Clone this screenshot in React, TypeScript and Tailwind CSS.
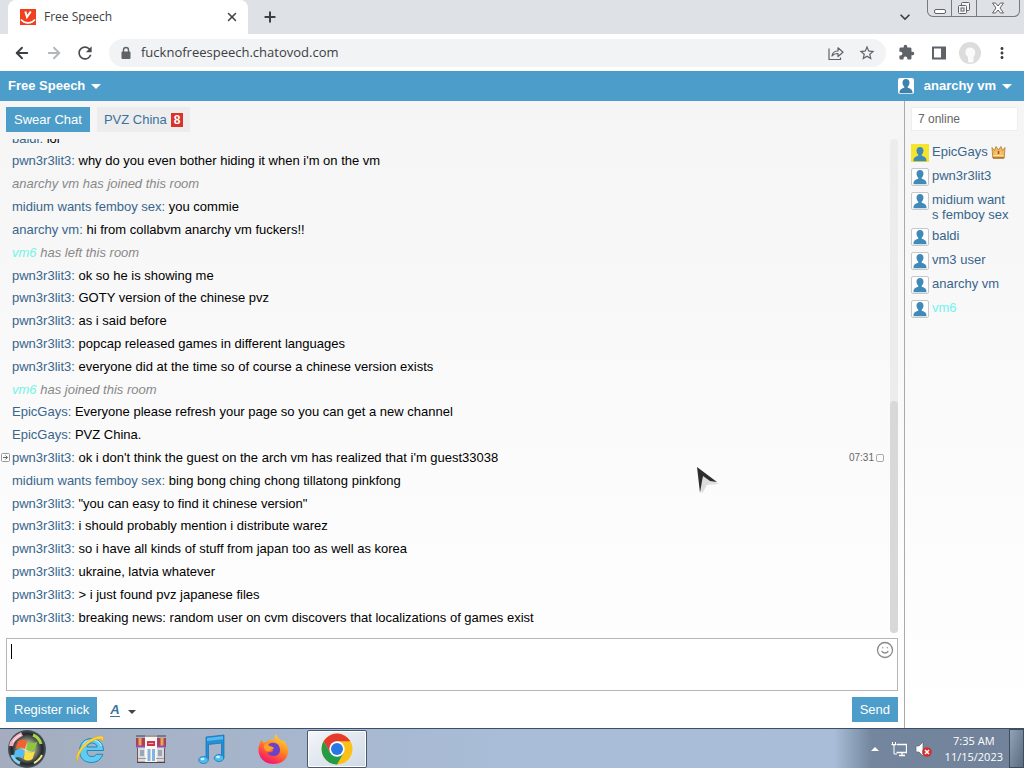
import React from 'react';
import { ArrowLeft, ArrowRight, Plus, Smile, X } from 'lucide-react';
import { MdKeyboardArrowDown, MdMoreVert, MdRefresh, MdStarBorder } from 'react-icons/md';

interface Message {
  from: string;
  text: string;
  system?: boolean;
  time?: string;
}

const messages: Message[] = [
  { from: 'baldi', text: 'lol' },
  { from: 'pwn3r3lit3', text: "why do you even bother hiding it when i'm on the vm" },
  { from: 'anarchy vm', text: 'has joined this room', system: true },
  { from: 'midium wants femboy sex', text: 'you commie' },
  { from: 'anarchy vm', text: 'hi from collabvm anarchy vm fuckers!!' },
  { from: 'vm6', text: 'has left this room', system: true },
  { from: 'pwn3r3lit3', text: 'ok so he is showing me' },
  { from: 'pwn3r3lit3', text: 'GOTY version of the chinese pvz' },
  { from: 'pwn3r3lit3', text: 'as i said before' },
  { from: 'pwn3r3lit3', text: 'popcap released games in different languages' },
  { from: 'pwn3r3lit3', text: 'everyone did at the time so of course a chinese version exists' },
  { from: 'vm6', text: 'has joined this room', system: true },
  { from: 'EpicGays', text: 'Everyone please refresh your page so you can get a new channel' },
  { from: 'EpicGays', text: 'PVZ China.' },
  { from: 'pwn3r3lit3', text: "ok i don't think the guest on the arch vm has realized that i'm guest33038", time: '07:31' },
  { from: 'midium wants femboy sex', text: 'bing bong ching chong tillatong pinkfong' },
  { from: 'pwn3r3lit3', text: '"you can easy to find it chinese version"' },
  { from: 'pwn3r3lit3', text: 'i should probably mention i distribute warez' },
  { from: 'pwn3r3lit3', text: 'so i have all kinds of stuff from japan too as well as korea' },
  { from: 'pwn3r3lit3', text: 'ukraine, latvia whatever' },
  { from: 'pwn3r3lit3', text: '> i just found pvz japanese files' },
  { from: 'pwn3r3lit3', text: 'breaking news: random user on cvm discovers that localizations of games exist' },
];

const users = ['EpicGays', 'pwn3r3lit3', 'midium wants femboy sex', 'baldi', 'vm3 user', 'anarchy vm', 'vm6'];

const Caret: React.FC<{ className?: string }> = ({ className }) => (
  <svg viewBox="0 0 10 5" className={className ?? 'h-[5px] w-2.5'} fill="currentColor">
    <path d="M0 0h10L5 5z" />
  </svg>
);

const PersonIcon: React.FC<{ className?: string }> = ({ className }) => (
  <svg viewBox="0 0 16 16" className={className} fill="currentColor">
    <path d="M8 1c2.200 0 3.500 1.500 3.500 3.600S10.300 8.300 9.700 8.800v1c2.300.5 4.800 1.700 4.800 4.700v.8h-13v-.8c0-3 2.500-4.200 4.800-4.700v-1C5.700 8.300 4.500 6.700 4.500 4.600S5.800 1 8 1z" />
  </svg>
);

const CrownIcon = () => (
  <svg viewBox="0 0 15 14" className="mt-px h-3.5 w-[15px]">
    <path d="M1 2.500l2.500 3L5 1.500l2.500 3.500L10 1.500l1.500 4 2.500-3-.8 10.500H1.800z" fill="#f2b95a" stroke="#b07a35" strokeWidth=".8" />
    <path d="M2.500 10.500h10M4.500 8h1.500M9 8h1.500" stroke="#fbe59a" />
    <path d="M7.500 6v3" stroke="#b8452f" strokeWidth="1.500" />
    <path d="M2 13h11" stroke="#8b5522" />
  </svg>
);

const Favicon = () => (
  <svg viewBox="0 0 16 16" className="h-4 w-4">
    <path fill="#f0401f" d="M0 0h16v16H0z" />
    <path d="M5.300 2.500L7 8l3.800-5.500" fill="none" stroke="#fff" strokeWidth="2" />
    <path d="M1 10.500c3.500 4.500 10.500 4.500 14 0" fill="none" stroke="#fff" strokeWidth="1.700" />
  </svg>
);

const BrowserTabs = () => (
  <div className="flex h-[34px] bg-[#dee1e6] pl-2 text-[#3c4043]">
    <div className="flex h-[34px] w-60 items-center rounded-t-lg bg-white pr-[9px] pl-3">
      <Favicon />
      <span className="ml-2 flex-1 text-xs">Free Speech</span>
      <button type="button" aria-label="Close tab">
        <X className="h-3.5 w-3.5" strokeWidth={2.5} />
      </button>
    </div>
    <button type="button" aria-label="New tab" className="ml-3.5">
      <Plus className="h-4 w-4" strokeWidth={3} />
    </button>
    <button type="button" aria-label="Search tabs" className="ml-auto">
      <MdKeyboardArrowDown className="h-5 w-5" />
    </button>
    <div className="mr-1 ml-3 flex h-[17px] divide-x divide-[#777b80] rounded-b-md border border-t-0 border-[#777b80] text-[#5f6368]">
      <button type="button" aria-label="Minimize" className="flex w-6 items-center justify-center">
        <svg viewBox="0 0 12 14" className="h-3.5 w-3" fill="#fff" stroke="currentColor">
          <rect x=".5" y="8.500" width="11" height="4" rx="1.500" />
        </svg>
      </button>
      <button type="button" aria-label="Restore" className="flex w-[25px] items-center justify-center">
        <svg viewBox="0 0 14 14" className="h-3.5 w-3.5" fill="#f4f5f6" stroke="currentColor">
          <rect x="4.500" y="1.500" width="8" height="8" rx="1" />
          <rect x="1.500" y="4.500" width="8" height="8" rx="1" />
          <rect x="4" y="7" width="3" height="3" />
        </svg>
      </button>
      <button type="button" aria-label="Close" className="flex w-[42px] items-center justify-center">
        <svg viewBox="0 0 14 12" className="h-3 w-3.5" fill="#fff" stroke="currentColor">
          <path d="M1.500 1h3L7 4l2.500-3h3L9 6l3.500 5h-3L7 8l-2.500 3h-3L5 6z" />
        </svg>
      </button>
    </div>
  </div>
);

const AddressBar = () => (
  <div className="flex h-[37px] items-center bg-white px-[13px] text-[#5f6368]">
    <button type="button" aria-label="Back"><ArrowLeft className="h-[18px] w-[18px] text-[#3c4043]" strokeWidth={2.5} /></button>
    <button type="button" aria-label="Forward" className="ml-3.5"><ArrowRight className="h-[18px] w-[18px] text-[#b4b7ba]" strokeWidth={2.5} /></button>
    <button type="button" aria-label="Reload" className="ml-3"><MdRefresh className="h-5 w-5 text-[#4a4d51]" /></button>
    <div className="ml-3.5 flex h-7 flex-1 items-center rounded-full bg-[#f1f3f4] px-2.5">
      <svg viewBox="0 0 14 14" className="h-3.5 w-3.5">
        <path d="M4.500 6V4a2.500 2.500 0 0 1 5 0v2" fill="none" stroke="currentColor" strokeWidth="1.400" />
        <rect x="2.500" y="5.500" width="9" height="7.500" rx="1" fill="currentColor" />
      </svg>
      <input
        aria-label="Address"
        readOnly
        value="fucknofreespeech.chatovod.com"
        className="ml-2 min-w-0 flex-1 bg-transparent text-[13px] text-[#3c4043] outline-none"
      />
      <button type="button" aria-label="Share">
        <svg viewBox="0 0 16 16" className="h-4 w-4" fill="none" stroke="currentColor" strokeWidth="1.200">
          <path d="M1 3.500v11h11.500V12.500" />
          <path d="M4 11c.5-3.500 3-5 6-5V2.800l5 4.400-5 4.300V8.500C7.500 8.500 5.500 9 4 11z" strokeLinejoin="round" />
        </svg>
      </button>
      <button type="button" aria-label="Bookmark" className="ml-3.5"><MdStarBorder className="h-[18px] w-[18px]" /></button>
    </div>
    <button type="button" aria-label="Extensions" className="ml-3">
      <svg viewBox="0 0 24 24" className="h-[17px] w-[17px]" fill="currentColor">
        <path d="M20.500 11H19V7c0-1.100-.9-2-2-2h-4V3.500a2.500 2.500 0 0 0-5 0V5H4c-1.100 0-2 .9-2 2v3.800h1.500a2.700 2.700 0 0 1 0 5.400H2V20c0 1.100.9 2 2 2h3.800v-1.500a2.700 2.700 0 0 1 5.400 0V22H17c1.100 0 2-.9 2-2v-4h1.500a2.500 2.500 0 0 0 0-5z" />
      </svg>
    </button>
    <button type="button" aria-label="Side panel" className="ml-4">
      <svg viewBox="0 0 16 16" className="h-4 w-4">
        <path d="M2 2.500h12v11H2z" fill="none" stroke="currentColor" strokeWidth="2" />
        <path d="M10 2h4v12h-4z" fill="currentColor" />
      </svg>
    </button>
    <button type="button" aria-label="Profile" className="ml-3">
      <svg viewBox="0 0 22 22" className="h-[22px] w-[22px]">
        <circle cx="11" cy="11" r="11" fill="#dcdcdc" />
        <path d="M9 20v-5C4.500 12 6 5.500 11 5.500s7 5.500 3.500 9.500V20c-1.500 1-4 1-5.500 0z" fill="#fafafa" />
      </svg>
    </button>
    <button type="button" aria-label="Menu" className="ml-3"><MdMoreVert className="h-[18px] w-[18px] text-[#3c4043]" /></button>
  </div>
);

const ChatHeader = () => (
  <header className="flex h-[30px] items-center justify-between bg-[#4c9dc9] px-2 font-bold text-white [text-shadow:0_1px_1px_#31729a]">
    <button type="button" className="flex items-center gap-1.5">
      Free Speech <Caret />
    </button>
    <button type="button" className="mr-1 flex items-center gap-1.5">
      <span className="mr-1 flex h-4 w-4 items-center justify-center rounded-xs bg-white">
        <PersonIcon className="h-4 w-4 text-[#3c82ac]" />
      </span>
      anarchy vm <Caret />
    </button>
  </header>
);

const MessageRow: React.FC<{ message: Message }> = ({ message }) => {
  const { from, text, system, time } = message;
  const name = from === 'vm6' ? 'text-[#74f5e6]' : system ? '' : 'text-[#38658c]';
  return (
    <li className="relative flex min-h-0 flex-1 items-center whitespace-pre pr-1.5 pl-3">
      {time && (
        <svg viewBox="0 0 9 9" className="absolute left-px h-[9px] w-[9px]" fill="none" stroke="#999">
          <rect x=".5" y=".5" width="8" height="8" rx="1" />
          <path d="M2 4.500h4.500M4.500 2.500l2 2-2 2" stroke="#666" />
        </svg>
      )}
      <p className={system ? 'flex-1 text-[#888] italic' : 'flex-1'}>
        <span className={name}>{from}</span>
        {system ? ' ' : <span className="text-[#38658c]">: </span>}
        {text}
      </p>
      {time && (
        <label className="flex items-center gap-0.5 text-[10px] text-[#666]">
          {time}
          <input type="checkbox" className="h-2 w-2 appearance-none rounded-xs border border-[#aaa]" />
        </label>
      )}
    </li>
  );
};

const ChatRoom = () => (
  <main className="flex min-w-0 flex-1 flex-col">
    <nav className="flex gap-[7px] px-1.5 pt-1.5">
      <button type="button" className="h-[25px] bg-[#4c9dc9] px-2 text-white">Swear Chat</button>
      <button type="button" className="flex h-[25px] items-center gap-1 bg-[#ededed] px-[7px] text-[#38739c]">
        PVZ China
        <span className="bg-[#d9342b] px-[3px] text-xs leading-[14px] font-bold text-white">8</span>
      </button>
    </nav>
    <div className="mt-[7px] mr-1.5 flex min-h-0 flex-1">
      <div className="flex min-h-0 flex-1 flex-col justify-end overflow-hidden pb-1">
        <ul className="flex h-[502px] shrink-0 flex-col">
          {messages.map((message, i) => (
            <MessageRow key={i} message={message} />
          ))}
        </ul>
      </div>
      <div className="flex w-2 flex-col justify-end rounded-full bg-[#ececec]">
        <div className="h-[232px] rounded-sm bg-[#d8d8d8]" />
      </div>
    </div>
    <form className="px-1.5 pt-[5px] pb-1.5">
      <div className="relative flex">
        <textarea aria-label="Message" className="h-[53px] w-full resize-none border border-[#b5b5b5] bg-white px-1 py-1 outline-none" />
        <span className="absolute top-1.5 left-[5px] h-[15px] w-px bg-black" />
        <Smile className="absolute top-[3px] right-1 h-[18px] w-[18px] text-[#888]" strokeWidth={1.7} />
      </div>
      <div className="mt-1.5 flex items-center">
        <button type="button" className="h-[25px] bg-[#4c9dc9] px-2 text-white">Register nick</button>
        <button type="button" className="ml-[13px] flex items-center gap-2 text-[#38739c]">
          <span className="border-b border-[#38739c] leading-[13px] font-bold italic">A</span>
          <Caret className="mt-1 h-1 w-2 text-[#444]" />
        </button>
        <button type="button" className="ml-auto h-[25px] bg-[#4c9dc9] px-2 text-white">Send</button>
      </div>
    </form>
  </main>
);

const UserList = () => (
  <aside className="w-[120px] border-l border-[#aaa] px-1.5 py-1.5">
    <input
      aria-label="Search users"
      placeholder="7 online"
      className="h-6 w-full border border-[#eee] bg-white px-1.5 text-xs outline-none placeholder:text-[#666]"
    />
    <ul className="mt-[13px] mr-2 flex flex-col gap-1.5 leading-[15px]">
      {users.map((user, i) => (
        <li key={user} className="flex min-h-[18px] gap-[3px]">
          <span
            className={
              i === 0
                ? 'flex h-[18px] w-[18px] shrink-0 items-end justify-center bg-[#f5e62c]'
                : 'flex h-[18px] w-[18px] shrink-0 items-end justify-center rounded-xs border border-[#c8c8c8] bg-white'
            }
          >
            <PersonIcon className="h-4 w-4 text-[#3f8ab8]" />
          </span>
          <a href="#" className={user === 'vm6' ? 'break-all text-[#6ff5ee]' : 'break-all text-[#38658c]'}>
            {user}
          </a>
          {i === 0 && <CrownIcon />}
        </li>
      ))}
    </ul>
  </aside>
);

const StartOrb = () => (
  <svg viewBox="0 0 40 40" className="h-10 w-10">
    <defs>
      <radialGradient id="orb">
        <stop offset="0" stopColor="#fff3c4" />
        <stop offset=".45" stopColor="#8b8f7a" />
        <stop offset=".8" stopColor="#22282a" />
        <stop offset="1" stopColor="#4b5560" />
      </radialGradient>
    </defs>
    <circle cx="20" cy="20" r="19" fill="url(#orb)" />
    <path d="M11 12c3-2 6-2 9 0l-2 8c-3-2-6-2-9.500 0z" fill="#f0622f" />
    <path d="M21 12.500c3 2 6 2 9.500 0l-2.500 8c-3 2-6 2-9 0z" fill="#8cc63e" />
    <path d="M8.200 21.500c3.500-2 6.500-2 9.500 0l-2 8c-3-2-6-2-9.500 0z" fill="#52bdf2" />
    <path d="M18.500 22c3 2 6 2 9.500 0l-2.500 8c-3 2-6 2-9 0z" fill="#fbdf4a" />
    <path d="M4 17c1-6 5-9 11-12" stroke="#f5aebf" strokeWidth="4" fill="none" />
    <path d="M6 13c2-4 5-6 8-7" stroke="#fff" strokeWidth="1" fill="none" />
    <path d="M26 6c5 2 7 5 8 9" stroke="#a6d64a" strokeWidth="3" fill="none" />
    <path d="M5 26c2 5 5 7 8 8" stroke="#7fd0f5" strokeWidth="3" fill="none" />
    <path d="M35 26c-2 4-4 6-8 8" stroke="#efe68a" strokeWidth="2" fill="none" />
  </svg>
);

const ExplorerIcon = () => (
  <svg viewBox="0 0 32 32" className="h-8 w-8">
    <path d="M29.500 17.500H13c0 4.500 2 6 5 6 2.200 0 3.500-.8 4.500-2.200h6.300C27 26.500 23 29.500 17.300 29.500 10.300 29.500 5.500 25 5.500 17.800S10.500 5.500 17.500 5.500s12 5 12 12zM13 14h10c-.3-2.500-2.200-4-4.900-4S13.500 11.500 13 14z" fill="#5fcdf2" stroke="#2086bd" />
    <path d="M8 15c1-5 5-8 10-8s8 2 9.500 6" fill="none" stroke="#b5ecfb" strokeWidth="1.200" />
    <path d="M4 29C0 25 4 15 14 8c7-5 14-6 15-4 1 1 0 3-1 5 0-2 0-3-2-3-5-.5-14 5-18 11-3 5-5 9-4 12z" fill="#fbd43c" stroke="#dba51f" strokeWidth=".5" />
  </svg>
);

const ShopIcon = () => (
  <svg viewBox="0 0 32 32" className="h-8 w-8">
    <path d="M3 13h26v15H3z" fill="#ded9d6" />
    <path d="M10 2h12v27H10z" fill="#f8f6f2" />
    <path d="M1 5h9v9H1zM22 5h9v9h-9z" fill="#a8405e" />
    <path d="M3.500 5h3v9h-3zM25.500 5h3v9h-3z" fill="#eda650" />
    <path d="M1 13.500h9M22 13.500h9" stroke="#8c4fb0" strokeWidth="2" />
    <path d="M12 8h8v5h-8z" fill="#cf3148" />
    <path d="M13.500 10.500h5" stroke="#f3b0a8" />
    <path d="M12.500 16h3v12h-3zM17 16h3v12h-3z" fill="#86b3de" />
    <path d="M5 17h4v6H5zM23 17h4v6h-4z" fill="#93a9bd" />
    <path d="M1 3h30M2 29.500h28" stroke="#4c4240" />
    <path d="M2.500 15v14M29.500 15v14" stroke="#6b5753" />
    <path d="M3 25.500h8M21 25.500h8" stroke="#a79a94" />
  </svg>
);

const MusicIcon = () => (
  <svg viewBox="0 0 32 32" className="h-8 w-8" stroke="#0d70b3" strokeWidth=".7">
    <path d="M10 4l18-2v23h-2.500V10L12.500 11.500V26H10z" fill="#2590d6" />
    <path d="M11 5l16-1.800v3L11 8z" fill="#5ab9ee" stroke="none" />
    <ellipse cx="7.500" cy="27" rx="4.800" ry="3.500" fill="#4dbcf2" />
    <ellipse cx="23" cy="25" rx="4.800" ry="3.500" fill="#4dbcf2" />
    <ellipse cx="6.500" cy="26" rx="2" ry="1.300" fill="#c9f3ff" stroke="none" />
    <ellipse cx="22" cy="24" rx="2" ry="1.300" fill="#c9f3ff" stroke="none" />
  </svg>
);

const FirefoxIcon = () => (
  <svg viewBox="0 0 32 32" className="h-8 w-8">
    <defs>
      <linearGradient id="fox" x1=".8" y1="0" x2=".3" y2="1">
        <stop offset="0" stopColor="#ffe13c" />
        <stop offset=".45" stopColor="#ff8a1e" />
        <stop offset=".8" stopColor="#ff3550" />
        <stop offset="1" stopColor="#e7157b" />
      </linearGradient>
    </defs>
    <path d="M19 1c1 3 3 5 6 7l1-1c4 4 5 8 5 11 0 8-6 13-14.500 13S1.500 25 1.500 17c0-4 1-7 3-10l2 3 3-1c2-3 5-3 8-2 0-2 0-4 1.500-6z" fill="url(#fox)" />
    <path d="M12 11c4-3 11-1 11 6 0 4-3 6-6.500 6-3 0-5-1-6-4 3 1 5 0 6-2-3 0-5-1-6-3 .5-1 1-2 1.500-3z" fill="#6b42c9" />
    <path d="M10 10c1 4 6 3 7 5-1 2-3 1-4 3-3 1-5 0-6-3-.5-2 1-5 3-5z" fill="#ff9d27" />
  </svg>
);

const ChromeIcon = () => (
  <svg viewBox="0 0 32 32" className="h-8 w-8">
    <circle cx="16" cy="16" r="15.500" fill="#fbc116" />
    <path d="M2.600 8.300A15.500 15.500 0 0 1 29.400 8.300H16L9.300 19.900z" fill="#e33b2e" />
    <path d="M2.600 8.300A15.500 15.500 0 0 0 16 31.500l6.700-11.700L9.300 19.900z" fill="#249b48" />
    <circle cx="16" cy="16" r="7.700" fill="#fff" />
    <circle cx="16" cy="16" r="6" fill="#2878e4" />
  </svg>
);

const Taskbar = () => (
  <footer className="flex h-10 items-center border-t border-[#36506b] bg-linear-to-r from-[#a4adbf] via-[#a9bdd8] to-[#a9bdd8] pl-[7px] text-white">
    <button type="button" aria-label="Start"><StartOrb /></button>
    <button type="button" aria-label="Internet Explorer" className="ml-3 flex w-[61px] justify-center"><ExplorerIcon /></button>
    <button type="button" aria-label="Store" className="flex w-[61px] justify-center"><ShopIcon /></button>
    <button type="button" aria-label="Music" className="flex w-[61px] justify-center"><MusicIcon /></button>
    <button type="button" aria-label="Firefox" className="flex w-[61px] justify-center"><FirefoxIcon /></button>
    <button
      type="button"
      aria-label="Chrome"
      className="ml-1 flex h-[38px] w-[60px] items-center justify-center rounded-xs border border-[#4b5a6b] bg-linear-to-br from-[#f4f6f9] to-[#cfd9e6] shadow-[inset_0_0_0_1px_#fff]"
    >
      <ChromeIcon />
    </button>
    <div className="ml-auto flex h-full w-[190px] items-center justify-end bg-linear-to-r from-[#a9bdd8] via-[#74869e] via-20% to-[#71829a]">
      <Caret className="h-1 w-2 rotate-180" />
      <svg viewBox="0 0 16 16" className="ml-3 h-4 w-4" fill="none" stroke="#fff">
        <path d="M6 3.500h9.500v8H5.500M8 14.500h6M11 12v2" strokeWidth="1.300" />
        <path d="M1.500 1v3h3V1M.5 3.500h5M3 4v9h3" />
      </svg>
      <svg viewBox="0 0 18 16" className="ml-2 h-4 w-[18px]">
        <path d="M1 5h3l4-4v14l-4-4H1z" fill="#fff" stroke="#59677a" strokeWidth=".7" />
        <circle cx="12" cy="11" r="4.800" fill="#d32f2f" />
        <path d="M10 9l4 4M14 9l-4 4" stroke="#fff" strokeWidth="1.500" />
      </svg>
      <div className="ml-3 text-center font-['Open_Sans','Noto_Sans',sans-serif] text-[11px] leading-4">
        <div>7:35 AM</div>
        <div>11/15/2023</div>
      </div>
      <button type="button" aria-label="Show desktop" className="ml-1.5 h-full w-[15px] border border-[#3d4d60] bg-linear-to-br from-[#93a3b6] to-[#5b6b80]" />
    </div>
  </footer>
);

const MousePointer = () => (
  <svg viewBox="0 0 24 30" className="pointer-events-none absolute top-[466px] left-[696px] h-[30px] w-6">
    <path d="M4 5l19 13-12 1-5 9z" fill="#000" opacity=".1" />
    <path d="M2 2l18 14-8 1-7 9z" fill="#dcdcdc" />
    <path d="M1 1l20 15-7-1-7-5-1 5-2 12z" fill="#2e2e2e" />
  </svg>
);

const App: React.FC = () => {
  return (
    <div className="relative flex h-screen flex-col overflow-hidden bg-white font-['Liberation_Sans',Arial,sans-serif] text-[13px] text-black">
      <div className="font-['Open_Sans','Noto_Sans',sans-serif]">
        <BrowserTabs />
        <AddressBar />
      </div>
      <ChatHeader />
      <div className="flex min-h-0 flex-1 bg-linear-to-b from-[#f5f5f5] to-white">
        <ChatRoom />
        <UserList />
      </div>
      <Taskbar />
      <MousePointer />
    </div>
  );
};

export default App;
